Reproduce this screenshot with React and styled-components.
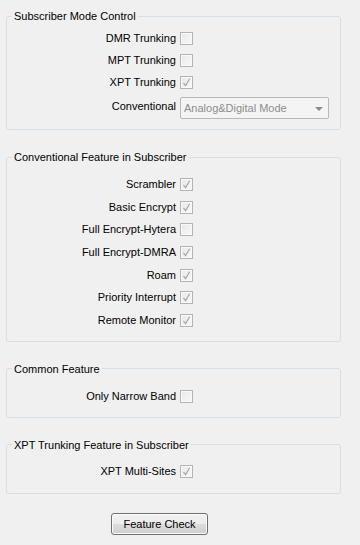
import React from "react";
import styled, { createGlobalStyle } from "styled-components";

const GlobalStyle = createGlobalStyle`
  body {
    margin: 0;
    background: #f0f0f0;
    font-family: "Liberation Sans", Arial, sans-serif;
    font-size: 11px;
    color: #000;
  }
`;

const Page = styled.div`
  width: 360px;
  height: 545px;
  box-sizing: border-box;
  padding: 9px 0 0 6px;
  display: flex;
  flex-direction: column;
  gap: 20px;
  background: #f0f0f0;
`;

const Group = styled.fieldset`
  width: 335px;
  box-sizing: border-box;
  margin: 0;
  padding: ${(p) => p.$top}px 0 ${(p) => p.$bottom}px;
  border: 1px solid #d5dfe5;
  border-radius: 3px;
  display: flex;
  flex-direction: column;
  gap: ${(p) => p.$gap}px;
  min-width: 0;
`;

const Legend = styled.legend`
  margin-left: 5px;
  padding: 0 2px;
  font-size: 11px;
  line-height: 14px;
  color: #000;
`;

const Row = styled.div`
  display: flex;
  align-items: ${(p) => (p.$top ? "flex-start" : "center")};
  margin-top: ${(p) => (p.$top ? "-1px" : "0")};
`;

const Label = styled.span`
  width: 169px;
  margin-right: 4px;
  text-align: right;
  line-height: 13px;
  white-space: nowrap;
  padding-top: ${(p) => (p.$top ? "3px" : "0")};
`;

const Box = styled.span`
  width: 13px;
  height: 13px;
  box-sizing: border-box;
  border: 1px solid #b4b4b4;
  background: linear-gradient(135deg, #e9e9e9 0%, #f8f8f8 100%);
  box-shadow: inset 0 0 0 1px #f9f9f9;
  display: flex;
  align-items: center;
  justify-content: center;
`;

const Combo = styled.div`
  width: 149px;
  height: 22px;
  box-sizing: border-box;
  border: 1px solid #b9b9b9;
  border-radius: 2px;
  background: #f4f4f4;
  color: #8d8d8d;
  display: flex;
  align-items: center;
  justify-content: space-between;
  padding: 0 5px 0 3px;
`;

const Arrow = styled.span`
  width: 0;
  height: 0;
  border-left: 4px solid transparent;
  border-right: 4px solid transparent;
  border-top: 4px solid #8a8a8a;
  margin-top: 1px;
`;

const ButtonRow = styled.div`
  display: flex;
  padding-left: 105px;
  margin-top: -1px;
`;

const Button = styled.button`
  width: 97px;
  height: 22px;
  box-sizing: border-box;
  border: 1px solid #707070;
  border-radius: 3px;
  background: linear-gradient(#f2f2f2 0%, #ebebeb 50%, #dddddd 51%, #cfcfcf 100%);
  font-family: "Liberation Sans", Arial, sans-serif;
  font-size: 11px;
  color: #000;
  padding: 0;
  box-shadow: inset 0 0 0 1px #fbfbfb;
`;

const Check = () => (
  <svg width="11" height="11" viewBox="0 0 11 11">
    <path d="M2.5 6 L4.6 8.6 L8.6 1.8" fill="none" stroke="#a9a9a9" strokeWidth="1.2" />
  </svg>
);

const CheckRow = ({ label, checked }) => (
  <Row>
    <Label>{label}</Label>
    <Box>{checked && <Check />}</Box>
  </Row>
);

const conventional = [
  ["Scrambler", true],
  ["Basic Encrypt", true],
  ["Full Encrypt-Hytera", false],
  ["Full Encrypt-DMRA", true],
  ["Roam", true],
  ["Priority Interrupt", true],
  ["Remote Monitor", true],
];

export default function App() {
  return (
    <>
      <GlobalStyle />
      <Page>
        <Group $top={9} $bottom={10} $gap={9}>
          <Legend>Subscriber Mode Control</Legend>
          <CheckRow label="DMR Trunking" />
          <CheckRow label="MPT Trunking" />
          <CheckRow label="XPT Trunking" checked />
          <Row $top>
            <Label $top>Conventional</Label>
            <Combo>
              <span>Analog&amp;Digital Mode</span>
              <Arrow />
            </Combo>
          </Row>
        </Group>

        <Group $top={14} $bottom={14} $gap={9.67}>
          <Legend>Conventional Feature in Subscriber</Legend>
          {conventional.map(([label, checked]) => (
            <CheckRow key={label} label={label} checked={checked} />
          ))}
        </Group>

        <Group $top={14} $bottom={14} $gap={0}>
          <Legend>Common Feature</Legend>
          <CheckRow label="Only Narrow Band" />
        </Group>

        <Group $top={13} $bottom={15} $gap={0}>
          <Legend>XPT Trunking Feature in Subscriber</Legend>
          <CheckRow label="XPT Multi-Sites" checked />
        </Group>

        <ButtonRow>
          <Button>Feature Check</Button>
        </ButtonRow>
      </Page>
    </>
  );
}
